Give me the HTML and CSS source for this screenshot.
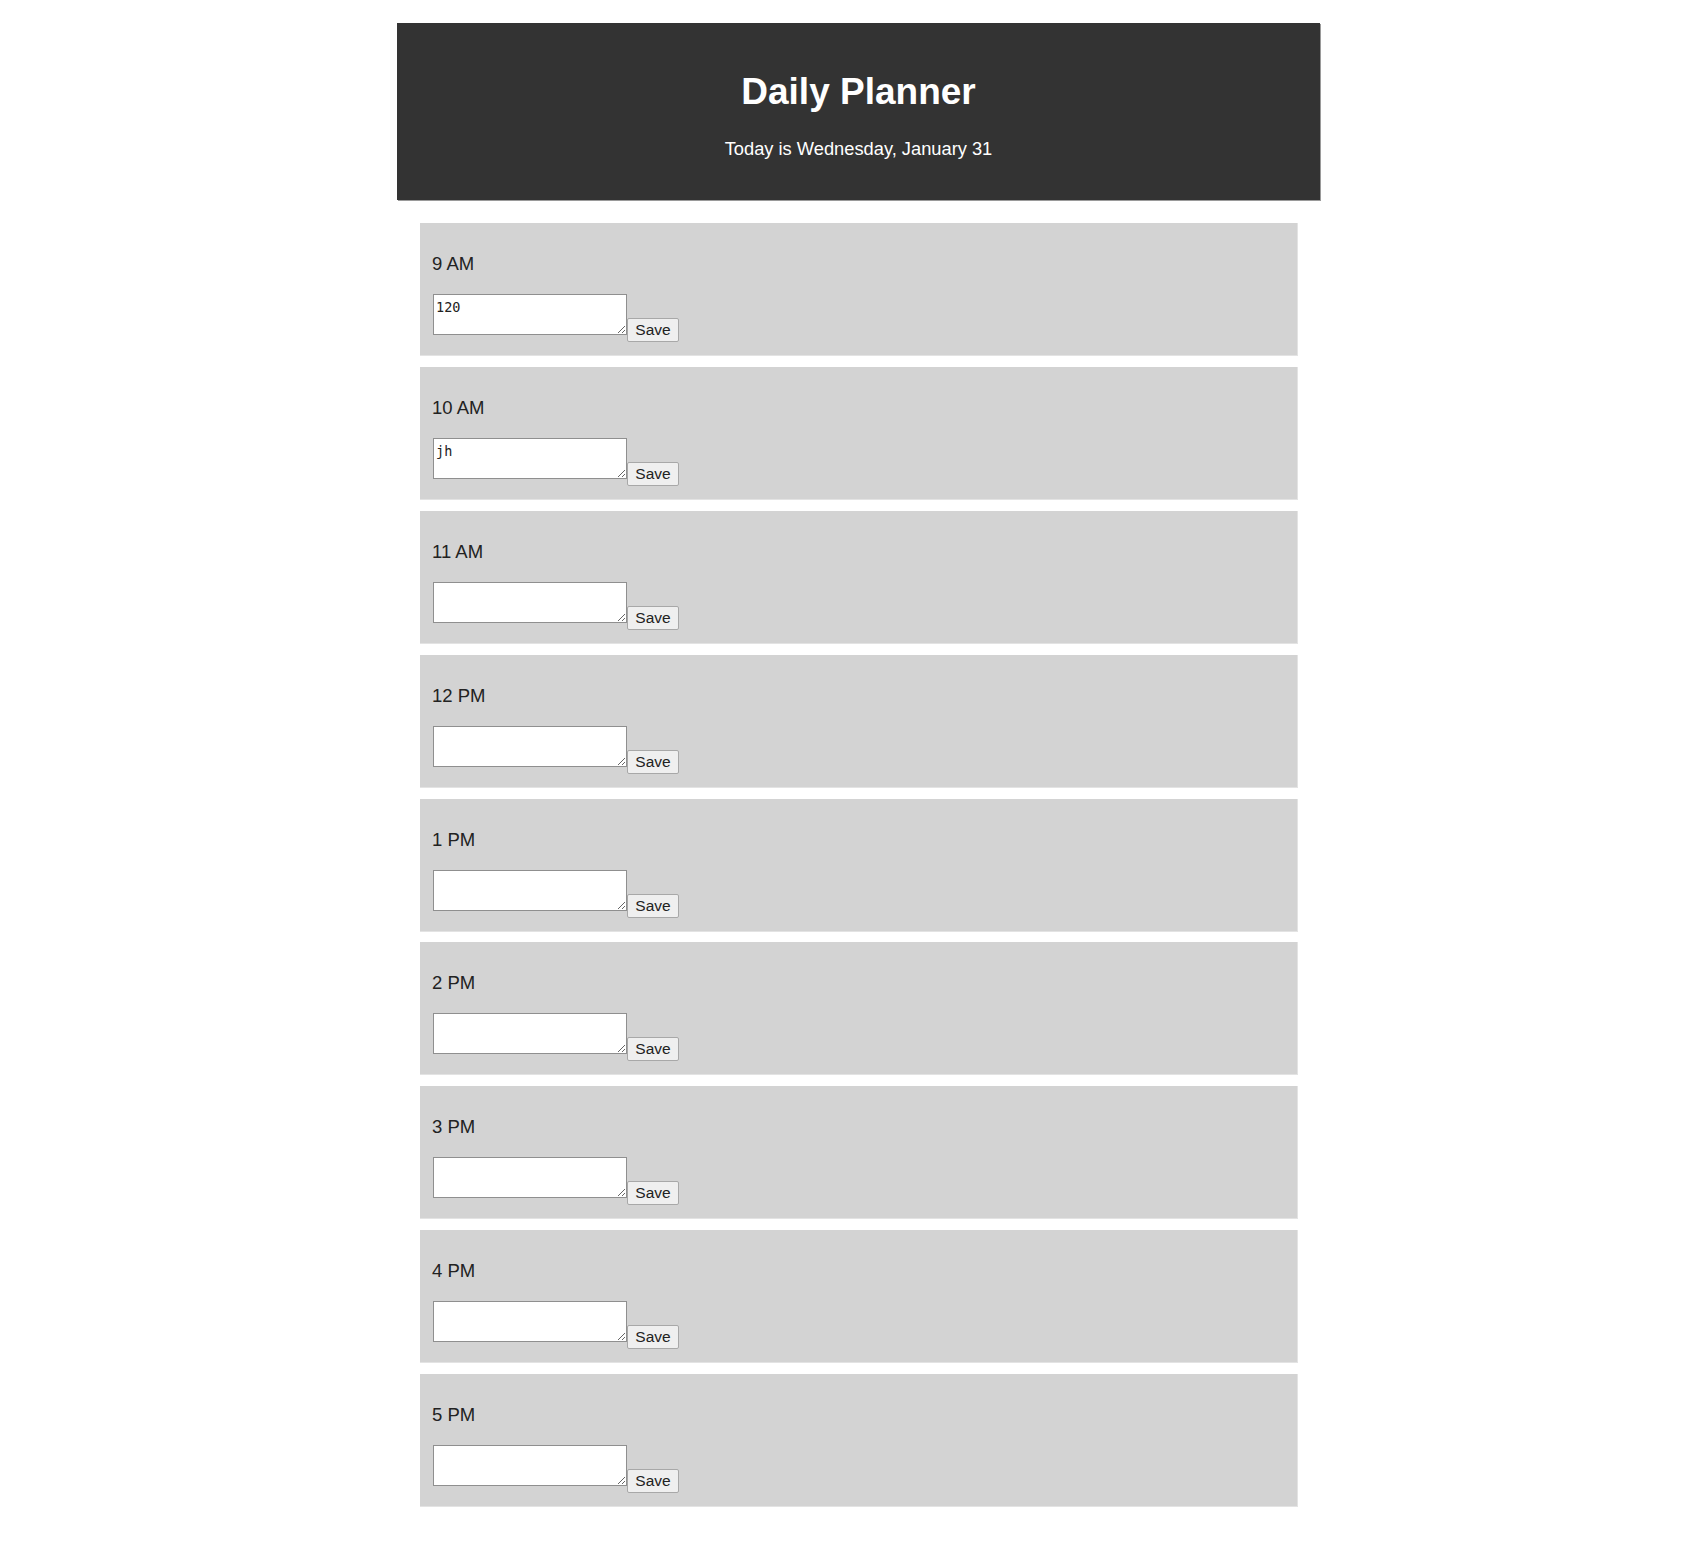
FILE: index.html
```html
<!DOCTYPE html>
<html lang="en">
<head>
<meta charset="utf-8">
<title>Daily Planner</title>
<link rel="stylesheet" href="styles.css">
</head>
<body>
<div class="page">
  <header class="header">
    <h1 class="title">Daily Planner</h1>
    <p class="today">Today is Wednesday, January 31</p>
  </header>
  <main class="hours">
    <section class="hour"><p class="label">9 AM</p><div class="entry"><textarea class="note">120</textarea><button class="save">Save</button></div></section>
    <section class="hour"><p class="label">10 AM</p><div class="entry"><textarea class="note">jh</textarea><button class="save">Save</button></div></section>
    <section class="hour"><p class="label">11 AM</p><div class="entry"><textarea class="note"></textarea><button class="save">Save</button></div></section>
    <section class="hour"><p class="label">12 PM</p><div class="entry"><textarea class="note"></textarea><button class="save">Save</button></div></section>
    <section class="hour"><p class="label">1 PM</p><div class="entry"><textarea class="note"></textarea><button class="save">Save</button></div></section>
    <section class="hour"><p class="label">2 PM</p><div class="entry"><textarea class="note"></textarea><button class="save">Save</button></div></section>
    <section class="hour"><p class="label">3 PM</p><div class="entry"><textarea class="note"></textarea><button class="save">Save</button></div></section>
    <section class="hour"><p class="label">4 PM</p><div class="entry"><textarea class="note"></textarea><button class="save">Save</button></div></section>
    <section class="hour"><p class="label">5 PM</p><div class="entry"><textarea class="note"></textarea><button class="save">Save</button></div></section>
  </main>
</div>
</body>
</html>
```

FILE: styles.css
```css
html, body {
  background: #ffffff;
}

body {
  margin: 0;
  padding: 23px 0 0 17px;
  font-family: "Liberation Sans", Arial, sans-serif;
  font-size: 18px;
  color: #222222;
}

.page {
  width: 923px;
  margin: 0 auto;
}

.header {
  background: #333333;
  color: #ffffff;
  text-align: center;
  padding: 24px 24px 23px;
  box-shadow: 1px 1px 0 #9a9a9a;
}

.title {
  font-size: 37px;
  font-weight: bold;
  margin: 24px 0 26px;
  line-height: 41px;
}

.today {
  font-size: 18.3px;
  margin: 18px 0;
  line-height: 21px;
}

.hours {
  padding: 23px 23px 0;
}

.hour {
  background: #d3d3d3;
  padding: 12px 12px 13px;
  margin-bottom: 10.9px;
  border-bottom: 1px solid #e3e3e3;
  box-shadow: 1px 0 0 #e3e3e3;
}

.label {
  margin: 18px 0 20px;
  line-height: 21px;
  font-size: 18.5px;
  color: #222222;
}

.entry {
  display: flex;
  align-items: flex-start;
  height: 48px;
  padding-left: 1px;
}

.note {
  box-sizing: border-box;
  width: 194px;
  height: 41px;
  margin: 0;
  padding: 4px 2px;
  font-family: "DejaVu Sans Mono", monospace;
  font-size: 13.5px;
  color: #222222;
  background: #ffffff;
  border: 1px solid #8f8f8f;
}

.save {
  box-sizing: border-box;
  margin: 24px 0 0 0;
  height: 24px;
  width: 52px;
  padding: 0 6px;
  font-family: "Liberation Sans", Arial, sans-serif;
  font-size: 15.5px;
  color: #222222;
  background: #efefef;
  border: 1px solid #a8a8a8;
  border-radius: 2px;
}
```
